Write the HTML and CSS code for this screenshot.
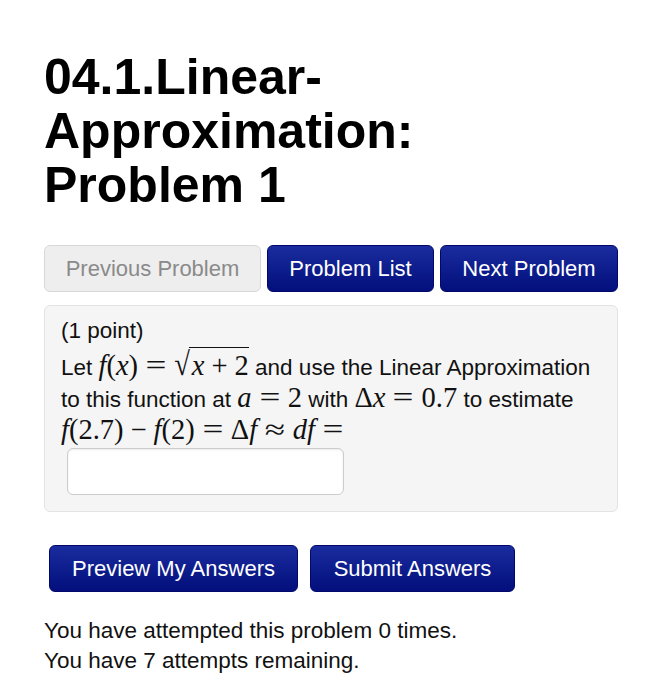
FILE: index.html
```html
<!DOCTYPE html>
<html lang="en">
<head>
<meta charset="utf-8">
<title>04.1.Linear-Approximation: Problem 1</title>
<link rel="stylesheet" href="styles.css">
</head>
<body>
<div class="page">
  <h1 class="title">04.1.Linear-<br>Approximation:<br>Problem 1</h1>

  <div class="nav">
    <span class="btn btn-disabled">Previous Problem</span>
    <a class="btn btn-primary" href="#">Problem List</a>
    <a class="btn btn-primary" href="#">Next Problem</a>
  </div>

  <div class="well">
    <div class="line">(1 point)</div>
    <div class="line">Let <span class="m"><i>f</i>(<i>x</i>)<span class="rel">=</span><span class="rad"><span class="surd">√</span><span class="vin"><i>x</i><span class="bin">+</span>2</span></span></span> and use the Linear Approximation</div>
    <div class="line">to this function at <span class="m"><i>a</i><span class="rel">=</span>2</span> with <span class="m">Δ<i>x</i><span class="rel">=</span>0.7</span> to estimate</div>
    <div class="line"><span class="m"><i>f</i>(2.7)<span class="bin">−</span><i>f</i>(2)<span class="rel">=</span>Δ<i>f</i><span class="rel">≈</span><i>df</i><span class="rel">=</span></span></div>
    <input class="answer" type="text" aria-label="answer">
  </div>

  <div class="actions">
    <a class="btn btn-primary" href="#">Preview My Answers</a>
    <a class="btn btn-primary" href="#">Submit Answers</a>
  </div>

  <div class="status">
    <div>You have attempted this problem 0 times.</div>
    <div>You have 7 attempts remaining.</div>
  </div>
</div>
</body>
</html>
```

FILE: styles.css
```css
html, body {
  margin: 0;
  padding: 0;
  background: #ffffff;
}

body {
  font-family: "Liberation Sans", Arial, Helvetica, sans-serif;
  font-size: 22.5px;
  color: #111111;
}

.page {
  padding: 0 45px 0 44px;
}

.title {
  margin: 50px 0 0;
  font-size: 50px;
  line-height: 54px;
  font-weight: bold;
  color: #000000;
}

.nav {
  display: flex;
  gap: 6px;
  margin-top: 33px;
}

.btn {
  display: inline-block;
  box-sizing: border-box;
  height: 47px;
  padding: 0 20px;
  line-height: 45px;
  font-size: 22px;
  border-radius: 6px;
  text-decoration: none;
  white-space: nowrap;
}

.btn-disabled {
  background: #eeeeee;
  border: 1px solid #d8d8d8;
  color: #8a8a8a;
}

.btn-primary {
  background: linear-gradient(to bottom, #1a2c9e, #020f7c);
  border: 1px solid #01086a;
  color: #ffffff;
}

.nav .btn-disabled { width: 217px; text-align: center; }
.nav .btn-primary:nth-child(2) { width: 167px; text-align: center; }
.nav .btn-primary:nth-child(3) { width: 178px; text-align: center; }

.well {
  margin-top: 13px;
  background: #f5f5f5;
  border: 1px solid #e3e3e3;
  border-radius: 6px;
  padding: 9px 16px 16px;
  line-height: 32px;
}

.m {
  font-family: "Liberation Serif", "Times New Roman", serif;
  font-size: 28.5px;
  line-height: 1;
  color: #111111;
  white-space: nowrap;
}

.m i {
  font-style: italic;
}

.rel {
  display: inline-block;
  margin: 0 10px;
  transform: scaleX(1.3);
}

.bin {
  margin: 0 7px;
}

.rad {
  white-space: nowrap;
}

.surd {
  display: inline-block;
  margin-right: -1px;
  transform: scaleY(1.15);
  transform-origin: 50% 85%;
}

.vin {
  display: inline-block;
  line-height: 1;
  padding: 4px 0 0 3px;
  border-top: 1.5px solid #111111;
}

.answer {
  display: block;
  box-sizing: border-box;
  width: 277px;
  height: 47px;
  margin: 0 0 0 6px;
  background: #ffffff;
  border: 1px solid #cccccc;
  border-radius: 6px;
  box-shadow: inset 0 1px 2px rgba(0, 0, 0, 0.08);
  font-size: 22px;
}

.actions {
  display: flex;
  gap: 12px;
  margin-top: 33px;
  padding-left: 5px;
}

.actions .btn-primary:nth-child(1) { width: 249px; text-align: center; }
.actions .btn-primary:nth-child(2) { width: 205px; text-align: center; }

.status {
  margin-top: 24px;
  line-height: 30px;
  color: #111111;
}
```
